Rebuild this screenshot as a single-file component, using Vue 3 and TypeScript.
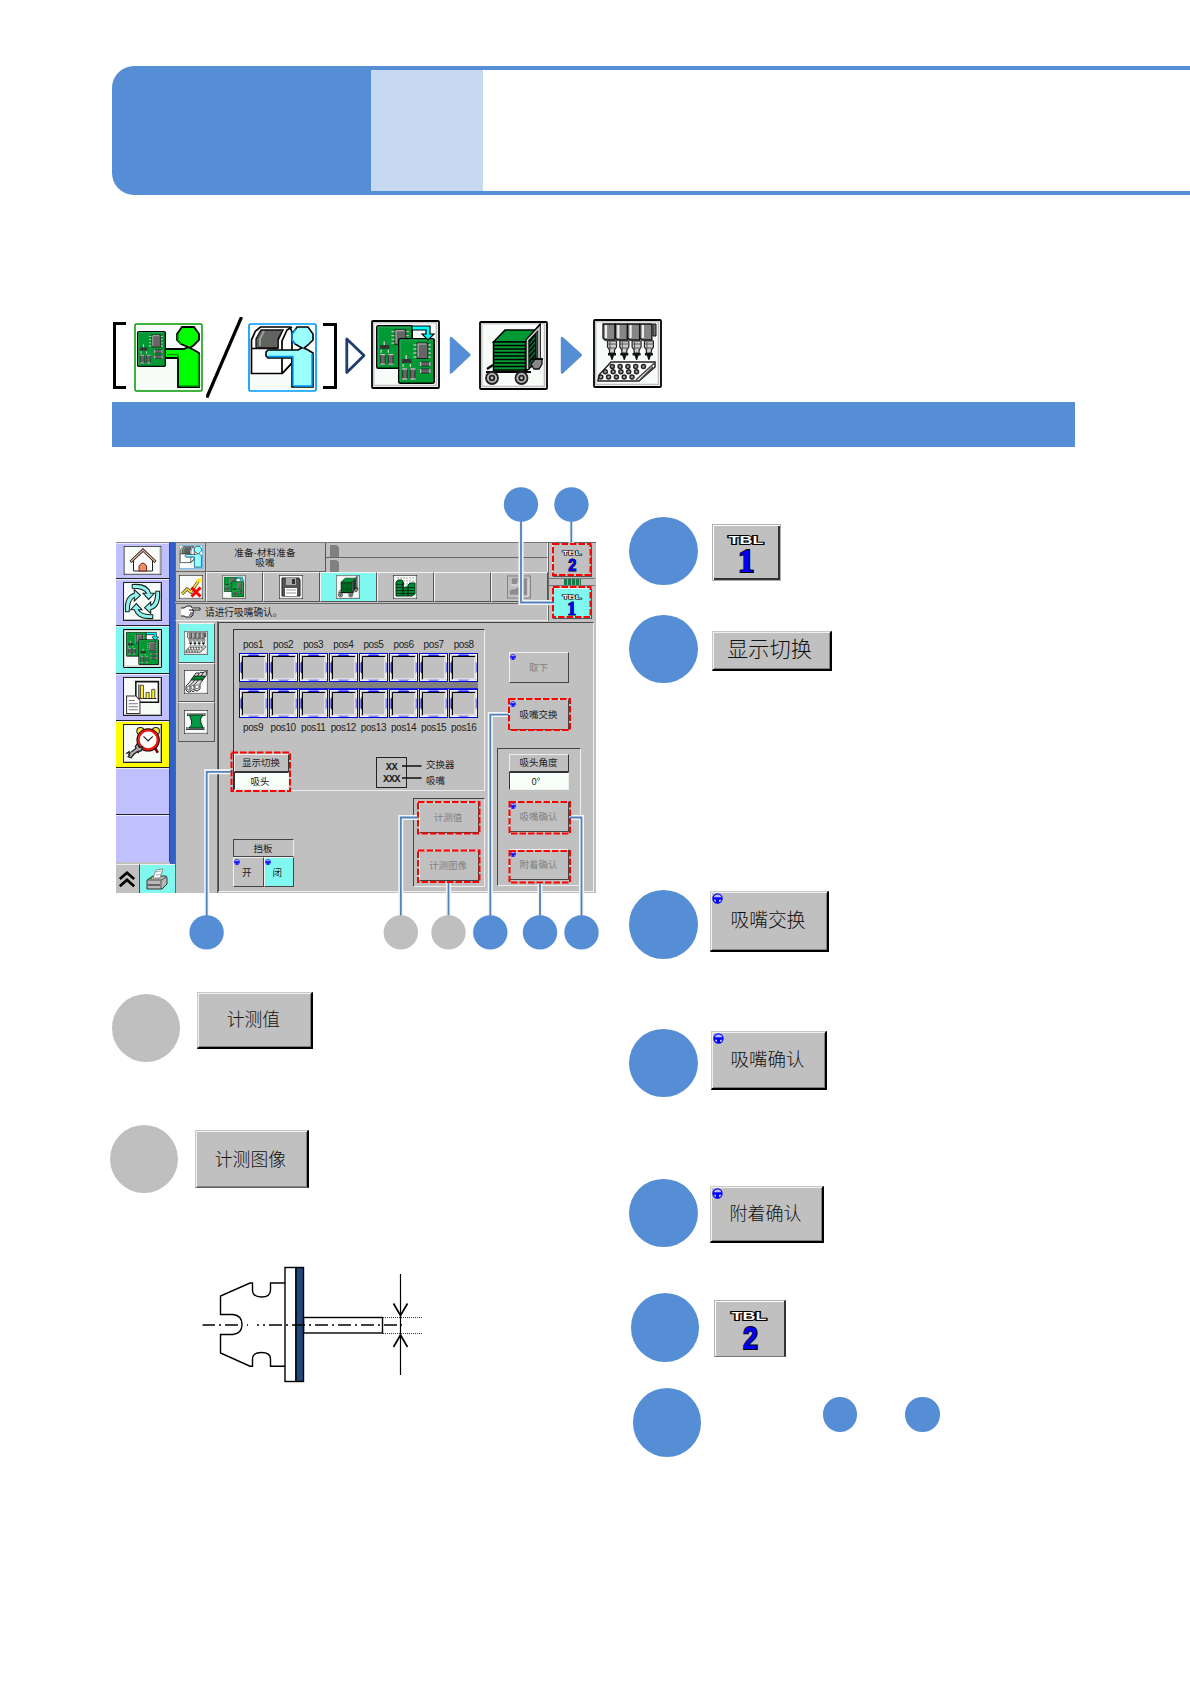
<template>
  <div class="page">
    <!-- 图标定义 -->
    <svg class="defs" width="0" height="0" aria-hidden="true">
      <defs>
        <symbol id="board" viewBox="0 0 36 46" preserveAspectRatio="none">
          <rect x=".8" y=".8" width="34.4" height="44.4" rx="1.5" fill="#009933" stroke="#000" stroke-width="1.6" />
          <path d="M2 43.8V2h32" fill="none" stroke="#33b060" stroke-width="1" />
          <path d="M15 7h17M15 11h17M15 15h17M15 19h17" stroke="#a8d0b0" stroke-width="1.3" />
          <rect x="18.5" y="5" width="10.5" height="15.5" fill="#666" stroke="#222" />
          <path d="M19.5 19V6h8" fill="none" stroke="#bbb" />
          <path d="M8 17v4M5 26v3M12 26v3" stroke="#ccc" stroke-width="1.3" />
          <path d="M4 21h9v4H4z" fill="#333" />
          <path d="M4.5 31H9v10H4.500zM12 31h4.500v10H12zM22 24h9v4h-9zM22 31h9v4h-9z" fill="#666" stroke="#222" stroke-width=".8" />
          <path d="M4 31h5M4 41h5M12 31h5M12 41h5M22 24v4M31 24v4M22 31v4M31 31v4" stroke="#c0c0c0" stroke-width="1.3" />
        </symbol>

        <symbol id="operator" viewBox="0 0 69 69">
          <rect x="1" y="1" width="67" height="67" rx="1.5" fill="#f7fcf8" stroke="#009900" stroke-width="1.5" />
          <path d="M48 4h12l5 7v6l-5 5-4 3 4 2 5 3v34H44V35H31v-9h19l4-2-7-3-4-4v-6z" fill="#00ff00" stroke="#000" stroke-width="1.8" />
          <path d="M44 34.5v-3H33M45.5 63h19V31M47 21l-3-4v-6" fill="none" stroke="#009900" stroke-width="1.5" />
          <use href="#board" x="3" y="8" width="29" height="36" />
        </symbol>

        <symbol id="feed" viewBox="0 0 69 69">
          <rect x="1" y="1" width="67" height="67" rx="1.5" fill="#f7fcfb" stroke="#0099ff" stroke-width="1.7" />
          <path d="M3.5 50.5V17l4-9 5-4H42l2 5v31L34 50.5zM34 50.5V18l5-11 5-3" fill="#fff" stroke="#000" stroke-width="1.7" />
          <path d="M3.5 25.5H30M30 25.5v-8l5-11M44 40l-9 10" fill="none" stroke="#000" stroke-width="1.4" />
          <path d="M8 25V16l5-9h22l-5 9v9z" fill="#60645f" stroke="#111" stroke-width="1.3" />
          <path d="M12 23v-7l4-8" fill="none" stroke="#9b9b9b" stroke-width="2" />
          <path d="M49 4h11l5 7v6l-5 5-4 3 4 2 5 3v34H44V35H20l-2-2v-4l2-2h30l4-2-7-4-3-4v-6z" fill="#99ffff" stroke="#000" stroke-width="1.6" />
          <path d="M20 33.5h25V63M64 31v32H46M47 21l-3-4v-6l4-5" fill="none" stroke="#0099ff" stroke-width="1.4" />
        </symbol>

        <symbol id="frame" viewBox="0 0 69 69">
          <rect x="1" y="1" width="67" height="67" rx="1" fill="#f7fcf9" stroke="#000" stroke-width="1.8" />
          <path d="M2.8 66V2.8H66" fill="none" stroke="#ccc" stroke-width="1.6" />
          <path d="M3 65.5h62.5V3" fill="none" stroke="#c0c0c0" stroke-width="1.6" />
        </symbol>

        <symbol id="boards" viewBox="0 0 69 69">
          <use href="#frame" width="69" height="69" />
          <use href="#board" x="5" y="5" width="37" height="44" />
          <use href="#board" x="27" y="18" width="37" height="46" />
          <path d="M41 6h18v8h4l-6 6-6-6h4v-4H41z" fill="#00ffff" stroke="#000" stroke-width="1.2" />
        </symbol>

        <symbol id="cart" viewBox="0 0 69 69">
          <use href="#frame" width="69" height="69" />
          <path d="M14.5 21L26 9h31L47 21z" fill="#009933" stroke="#000" stroke-width="1.5" />
          <path d="M47 21L57 9v33L47 50z" fill="#063" stroke="#000" stroke-width="1.5" />
          <path d="M48 23l8-9M48 28l8-9M48 33l8-9M48 38l8-9M48 43l8-9" stroke="#000" stroke-width="1.5" />
          <rect x="14.5" y="21" width="32" height="30" fill="#009933" stroke="#000" stroke-width="1.5" />
          <path d="M15 24.5h31M15 28h31M15 31.5h31M15 35h31M15 38.5h31M15 42h31M15 45.5h31M15 49h31" stroke="#000" stroke-width="1.3" />
          <path d="M52 43l5-6 6 1v5l-3 5h-5z" fill="#888" stroke="#111" stroke-width="1.3" />
          <path d="M48.5 49V19L60 6v32" fill="none" stroke="#000" stroke-width="3.6" />
          <path d="M48.5 48V19L60 7v31" fill="none" stroke="#ccc" stroke-width="1.700" />
          <path d="M7 51h45M8 48l6-4" stroke="#000" stroke-width="2.2" />
          <g fill="#bbb" stroke="#222" stroke-width="1.8">
            <circle cx="13" cy="57" r="6" /><circle cx="42.5" cy="57" r="6" />
            <circle cx="13" cy="57" r="2.3" /><circle cx="42.5" cy="57" r="2.3" />
          </g>
          <path d="M53 38h11" stroke="#000" stroke-width="1.8" />
        </symbol>

        <symbol id="nozzles" viewBox="0 0 69 69">
          <use href="#frame" width="69" height="69" />
          <g v-for="n in 4" :key="n" :transform="`translate(${10 + (n - 1) * 12.3} 5)`">
            <path d="M0 0h12v16H2l-2-2z" fill="#858585" stroke="#111" stroke-width="1.3" />
            <path d="M3 1v13" stroke="#eee" stroke-width="2.2" />
            <path d="M4.5 17h9v6l-2 3v3h-5v-3l-2-3z" fill="#ccc" stroke="#222" stroke-width="1.2" />
            <path d="M7 18v8M4.5 20h9M6 24h6" stroke="#555" stroke-width="1" />
            <path d="M5 29h8v2.500H11L9.500 36h-1L7 31.500H5z" fill="#111" />
          </g>
          <path d="M60 5h3v12h-3z" fill="#777" stroke="#111" />
          <path d="M18 43h44v5L46 62H5l1-6z" fill="#fff" stroke="#222" stroke-width="1.500" />
          <path d="M62 43.500L43 61M60 48L47 61" stroke="#444" stroke-width="1.600" />
          <g fill="#999" stroke="#222" stroke-width="1.500">
            <circle v-for="n in 5" :key="`a${n}`" :cx="11.500 + n * 7.800" cy="47.500" r="2" />
            <circle v-for="n in 5" :key="`b${n}`" :cx="4.500 + n * 7.800" cy="52.800" r="2" />
            <circle v-for="n in 5" :key="`c${n}`" :cx="0 + n * 7.800" cy="58" r="2" />
          </g>
        </symbol>

        <symbol id="box" viewBox="0 0 38 38" preserveAspectRatio="none">
          <rect x=".5" y=".5" width="37" height="37" fill="#f8fcf9" stroke="#222" />
          <path d="M1.500 36.500h35v-35" fill="none" stroke="#b5b5b5" />
        </symbol>

        <symbol id="home" viewBox="0 0 38 29">
          <use href="#box" width="38" height="29" />
          <path d="M10 14v11h19V14l-9-9z" fill="#fff" stroke="#222" />
          <path d="M7 16L19.500 4 32 16" fill="none" stroke="#222" stroke-width="3" />
          <path d="M7.500 15.500L19.500 4l12 11.500" fill="none" stroke="#f4b4a0" stroke-width="1.2" />
          <path d="M15.500 25v-5q4-6 7.500 0v5z" fill="#e8935f" stroke="#722" />
        </symbol>

        <symbol id="cycle" viewBox="0 0 38 38">
          <use href="#box" width="38" height="38" />
          <g v-for="a in [0, 90, 180, 270]" :key="a" :transform="`rotate(${a} 19 19)`" stroke="#15201f" stroke-width="1" fill="#8ff5f0">
            <path d="M9 2.500Q24 1 27 11h3.500L25 17l-5.500-6H23Q20.500 6 9 6z" />
          </g>
        </symbol>

        <symbol id="chart" viewBox="0 0 38 38">
          <use href="#box" width="38" height="38" />
          <path d="M12.500 4.500h22v20h-22z" fill="#fff" stroke="#111" stroke-width="1.500" />
          <path d="M15.500 7v14h17" fill="none" stroke="#111" />
          <path d="M17 8h3v13h-3zM22.500 15h3v6h-3zM28 12h3v9h-3z" fill="#ffee22" stroke="#333" stroke-width=".8" />
          <path d="M3.500 18.500h9l4 4v13h-13z" fill="#fff" stroke="#333" />
          <path d="M5.500 23h6M5.500 26h9M5.500 29h9M5.500 32h9" stroke="#777" />
        </symbol>

        <symbol id="alarm" viewBox="0 0 38 38">
          <use href="#box" width="38" height="38" />
          <path d="M17 23l-3 5M31 23l3 5" stroke="#600" stroke-width="2.500" />
          <circle cx="17" cy="7" r="3.500" fill="#ffe733" stroke="#221" />
          <circle cx="32" cy="7" r="3.500" fill="#ffe733" stroke="#221" />
          <circle cx="24.500" cy="15.500" r="9.500" fill="#fff" stroke="#200" stroke-width="3.800" />
          <circle cx="24.500" cy="15.500" r="9.300" fill="#fff" stroke="#e61c14" stroke-width="2.200" />
          <path d="M20 12l4.500 4.500L29 12" fill="none" stroke="#222" stroke-width="1.200" />
          <path d="M6 31l9-7" stroke="#222" stroke-width="4.500" />
          <path d="M3 29l3-2 1.500 2.500L5 32l3 1 2-3-1-3M12 22l2-3 2 4 3-1-1 4-4 1z" fill="#aaa" stroke="#222" stroke-width="1.200" />
          <path d="M7 30l8-6" stroke="#aaa" stroke-width="2.200" />
        </symbol>

        <symbol id="trace-off" viewBox="0 0 24 24">
          <use href="#box" width="24" height="24" />
          <path d="M3 19l5-5 4 3 8-12" fill="none" stroke="#333" stroke-width="3" />
          <path d="M3 19l5-5 4 3 8-12M17 6l4-2v4" fill="none" stroke="#ffe42a" stroke-width="1.700" />
          <path d="M12.500 12.500l9 9M21.500 12.500l-9 9" stroke="#f00" stroke-width="3" />
        </symbol>

        <symbol id="floppy" viewBox="0 0 24 24">
          <use href="#box" width="24" height="24" />
          <path d="M3 3h17l1 2v16H3z" fill="#555" stroke="#222" />
          <path d="M7 3h10v7H7z" fill="#aaa" /><path d="M13 4h3v5h-3z" fill="#333" />
          <path d="M6 13h12v8H6z" fill="#fff" /><path d="M7 15h10M7 18h10" stroke="#999" />
        </symbol>

        <symbol id="stacks" viewBox="0 0 24 24">
          <use href="#box" width="24" height="24" />
          <path d="M4 3h17M4 6h17M10 9h11" stroke="#aaa" stroke-dasharray="2 1" />
          <path d="M3 21V7l2-2h4l1 2v7l2-2h3v-2l2-2h5v11l-3 2z" fill="#008a35" stroke="#063218" />
          <path d="M3 9.500h7M3 12.500h7M3 15.500h18M3 18.500h18M15 12.500h7" stroke="#063218" />
          <path d="M10 7v13M15 12v9" stroke="#063218" stroke-width="1.500" />
        </symbol>

        <symbol id="gray-unit" viewBox="0 0 25 24">
          <rect x=".5" y=".5" width="24" height="23" fill="#c0c0c0" stroke="#808080" />
          <path d="M5 3h7l-2 6H5zM3 15l6-1 5-3v9H3zM15 5l2-2h4v18h-4V10h-2z" fill="#8d8d8d" />
          <path d="M4 10h7M14 21.500h8V4" fill="none" stroke="#e4e4e4" />
        </symbol>

        <symbol id="feeder" viewBox="0 0 24 24">
          <use href="#box" width="24" height="24" />
          <g v-for="n in 3" :key="n" :transform="`translate(${(n - 1) * 4} ${(1 - n) * 0.6})`">
            <path d="M2 16l3-3 7-10h3l-1 4-6 8v5l-2 2H4l-2-2z" fill="#ddd" stroke="#333" />
            <circle cx="5" cy="18" r="2" fill="#fff" stroke="#555" stroke-width=".8" />
          </g>
          <path d="M7 10l3-4h11l-3 4z" fill="#008833" stroke="#111" stroke-width=".8" />
        </symbol>

        <symbol id="film" viewBox="0 0 24 24">
          <use href="#box" width="24" height="24" />
          <path d="M3 4.500h18.500M2 18.500h18.500" stroke="#444" stroke-width="3" />
          <path d="M3.500 4h17M2.500 18h17" stroke="#eee" />
          <path d="M5.500 5H19q-4 4-2 8l2 5H5q4-3 2.500-7z" fill="#009944" stroke="#063218" />
        </symbol>

        <symbol id="wheel" viewBox="0 0 11 11">
          <circle cx="5.500" cy="5.500" r="4.600" fill="#b8c0f0" stroke="#0000ff" stroke-width="1.200" />
          <path d="M1 4.300h9v2.400H7V9h1v1H3V9h1V6.700H1z" fill="#0000ff" />
        </symbol>

        <symbol id="slot" viewBox="0 0 30 29">
          <rect x=".5" y=".5" width="28" height="28" fill="none" stroke="#0000e0" />
          <rect x="1.500" y="1.500" width="26" height="26" fill="none" stroke="#f4f4ff" />
          <path d="M10 1.500h9l1.500 1.500h-12zM10 27.500h9l1.500-1.500h-12zM1.500 10v9L3 21V8zM27.500 10v9l-1.500 2V8z" fill="#1818e8" />
          <rect x="3" y="3" width="23.500" height="23.500" fill="#c0c0c0" />
          <path d="M3.500 26V3.500H26" fill="none" stroke="#000" />
          <path d="M4 26h22V4" fill="none" stroke="#fff" />
        </symbol>
      </defs>
    </svg>

    <header class="banner">
      <div class="banner-main"></div>
      <div class="banner-sub"></div>
    </header>

    <nav class="crumbs">
      <svg class="bracket-l" width="15" height="68" viewBox="0 0 15 68"><path d="M14 1.500H2.500v64H14" fill="none" stroke="#000" stroke-width="3" /></svg>
      <svg class="crumb c-operator"><use href="#operator" /></svg>
      <svg class="slash" width="40" height="82" viewBox="0 0 40 82"><path d="M35.500 0L.8 80.500" stroke="#000" stroke-width="3.200" /></svg>
      <svg class="crumb c-feed"><use href="#feed" /></svg>
      <svg class="bracket-r" width="16" height="67" viewBox="0 0 16 67"><path d="M1 1.500h12.500v63H1" fill="none" stroke="#000" stroke-width="3" /></svg>
      <svg class="tri-open" width="24" height="38" viewBox="0 0 24 38"><path d="M2.800 2v33.500L20 18.500z" fill="#fff" stroke="#1f3f6e" stroke-width="2.800" stroke-linejoin="round" /></svg>
      <svg class="crumb c-boards"><use href="#boards" /></svg>
      <svg class="tri t1" width="22" height="38" viewBox="0 0 22 38"><path d="M2 2v34.500L20.500 19z" fill="#558ed5" stroke="#558ed5" stroke-width="2.400" stroke-linejoin="round" /></svg>
      <svg class="crumb c-cart"><use href="#cart" /></svg>
      <svg class="tri t2" width="22" height="38" viewBox="0 0 22 38"><path d="M2 2v34.500L20.800 19z" fill="#558ed5" stroke="#558ed5" stroke-width="2.400" stroke-linejoin="round" /></svg>
      <svg class="crumb c-nozzles"><use href="#nozzles" /></svg>
    </nav>

    <div class="section-bar"></div>

    <main class="content">
      <section class="left">
        <div class="figure">
          <div class="screen">
            <div class="side">
              <div class="side-top">
                <ul class="menu">
                  <li v-for="(m, i) in menu" :key="i" :class="['menu-item', m.state]">
                    <svg v-if="m.icon" :class="['menu-icon', m.icon]"><use :href="`#${m.icon}`" /></svg>
                  </li>
                </ul>
                <div class="strip"></div>
              </div>
              <div class="side-bottom">
                <div class="up">
                  <svg width="18" height="20" viewBox="0 0 20 22"><path d="M2 11l8-7 8 7M2 19l8-7 8 7" fill="none" stroke="#000" stroke-width="3" /></svg>
                </div>
                <div class="print">
                  <svg width="24" height="24" viewBox="0 0 24 24">
                    <path d="M2 13l6-4h13l1 2v6l-5 5H2z" fill="#b8b8b8" stroke="#333" />
                    <path d="M2 13h14l6-3M16 13v9" fill="none" stroke="#555" />
                    <path d="M8 11l3-8 7-1-3 9z" fill="#fff" stroke="#777" stroke-width=".8" />
                    <path d="M11 8l5-1M11 5l5-1" stroke="#aaa" /><path d="M3 17h12v2H3z" fill="#666" />
                    <path d="M5 11h2" stroke="#0a0" stroke-width="2" />
                  </svg>
                </div>
              </div>
            </div>

            <div class="work">
              <div class="top">
                <div class="top-main">
                  <div class="title-row">
                    <div class="title-icon"><svg class="i24"><use href="#feed" /></svg></div>
                    <div class="title"><span>准备-材料准备</span><span>吸嘴</span></div>
                    <div class="info"><div v-for="n in 2" :key="n" class="info-line"><i></i></div></div>
                  </div>
                  <div class="tool-row">
                    <div class="title-icon"><svg class="i24"><use href="#trace-off" /></svg></div>
                    <div v-for="(t, i) in tools" :key="i" :class="['tool', { on: t === 'cart' }]">
                      <svg v-if="t" class="i24"><use :href="`#${t}`" /></svg>
                    </div>
                  </div>
                  <div class="message">
                    <svg width="21" height="14" viewBox="0 0 21 14"><path d="M1 3h3l3-2h4l1 2h8v2h-8l2 1-1 2v2l-2 2H6l-2-1H1M9 5h4M10 8h3M9 10h3" fill="#f8f8f8" stroke="#222" stroke-width="1" /></svg>
                    <span>请进行吸嘴确认。</span>
                  </div>
                </div>
                <div class="tables">
                  <div class="table-btn">
                    <svg viewBox="0 0 69 57" class="tbl-mini"><text x="17" y="18.500" class="tbl-word" textLength="35" lengthAdjust="spacingAndGlyphs">TBL</text><text x="27.500" y="48" class="tbl-two" textLength="15" lengthAdjust="spacingAndGlyphs">2</text></svg>
                  </div>
                  <div class="table-link"><i></i></div>
                  <div class="table-btn on">
                    <svg viewBox="0 0 69 57" class="tbl-mini"><text x="17" y="18.500" class="tbl-word" textLength="35" lengthAdjust="spacingAndGlyphs">TBL</text><text x="26" y="47.500" class="tbl-one">1</text></svg>
                  </div>
                </div>
              </div>

              <div class="lower">
                <div class="tabs">
                  <div v-for="(t, i) in tabs" :key="t" :class="['tab', { on: i === 0 }]">
                    <svg class="i24"><use :href="`#${t}`" /></svg>
                  </div>
                </div>

                <div class="panel">
                  <div class="panel-left">
                    <div class="slots">
                      <div class="pos-row"><span v-for="n in 8" :key="n">pos{{ n }}</span></div>
                      <div class="slot-row"><svg v-for="n in 8" :key="n"><use href="#slot" /></svg></div>
                      <div class="rail"></div>
                      <div class="slot-row"><svg v-for="n in 8" :key="n"><use href="#slot" /></svg></div>
                      <div class="pos-row bottom"><span v-for="n in 8" :key="n">pos{{ n + 8 }}</span></div>
                      <div class="slots-foot">
                        <div class="toggle">
                          <div class="toggle-label">显示切换</div>
                          <div class="toggle-value">吸头</div>
                        </div>
                        <div class="legend-box"><b>XX</b><b>XXX</b></div>
                        <div class="legend">
                          <span>交换器</span>
                          <span>吸嘴</span>
                        </div>
                      </div>
                    </div>
                    <div class="panel-foot">
                      <div class="shutter">
                        <div class="shutter-label">挡板</div>
                        <div class="shutter-btns">
                          <div class="mini-btn"><svg class="wheel"><use href="#wheel" /></svg>开</div>
                          <div class="mini-btn on"><svg class="wheel"><use href="#wheel" /></svg>闭</div>
                        </div>
                      </div>
                      <div class="measure">
                        <div class="btn dim">计测值</div>
                        <div class="btn dim">计测图像</div>
                      </div>
                    </div>
                  </div>
                  <div class="panel-right">
                    <div class="btn dim"><svg class="wheel"><use href="#wheel" /></svg>取下</div>
                    <div class="btn swap"><svg class="wheel"><use href="#wheel" /></svg>吸嘴交换</div>
                    <div class="angle">
                      <div class="angle-label">吸头角度</div>
                      <div class="angle-value">0°</div>
                      <div class="btn dim"><svg class="wheel"><use href="#wheel" /></svg>吸嘴确认</div>
                      <div class="btn dim"><svg class="wheel"><use href="#wheel" /></svg>附着确认</div>
                    </div>
                  </div>
                </div>
              </div>
            </div>
          </div>

          <!-- 引出线与标注圆点 -->
          <svg class="callouts" viewBox="112 447 500 520">
            <path d="M402 766h19.500M402 778h19.500" stroke="#111" stroke-width="1.300" />
            <g fill="none" stroke="#f5f5f5" stroke-width="5">
              <path v-for="(d, i) in leaders" :key="i" :d="d" />
            </g>
            <g fill="none" stroke="#ff0000" stroke-width="2" stroke-dasharray="6.500 2">
              <rect v-for="(f, i) in frames" :key="i" :x="f[0]" :y="f[1]" :width="f[2]" :height="f[3]" />
            </g>
            <g fill="none" stroke="#4f81bd" stroke-width="1.800">
              <path v-for="(d, i) in leaders" :key="i" :d="d" />
            </g>
            <circle v-for="(c, i) in dots" :key="i" :cx="c.x" :cy="c.y" r="17.200" :fill="c.off ? '#bfbfbf' : '#558ed5'" />
          </svg>
        </div>

        <div class="item item-value">
          <div class="dot gray"></div>
          <div class="key">计测值</div>
        </div>
        <div class="item item-image">
          <div class="dot gray"></div>
          <div class="key">计测图像</div>
        </div>

        <!-- 吸嘴侧视图 -->
        <svg class="nozzle" width="250" height="150" viewBox="0 0 250 150" fill="none" stroke="#000" stroke-width="1.400">
          <path d="M95 33H80.500v7q0 7-9 7t-9-7v-7H60L30.500 46v18.500H43q9 1 9 10t-9 10H30.500V103L60 116.200h2.500V109q0-6.500 9-6.500t9 6.500v7.200H95" />
          <rect x="95" y="17.500" width="11" height="114" />
          <rect x="106" y="17.500" width="7.500" height="114" fill="#1f497d" />
          <rect x="113.500" y="67.500" width="79" height="15.500" />
          <path d="M12.500 75H25m4 0h2m4 0h13m9 0h1M67 75h2m4 0h2m4 0h13m4 0h2m4 0h13m4 0h2m4 0h13m4 0h2m4 0h13m4 0h2m4 0h13m4 0h2m4 0h13m3 0h2" />
          <path d="M193 67.500h40M193 83.500h40" stroke-width=".8" stroke-dasharray="1 1" />
          <path d="M210.500 24v101" stroke-width="1.200" />
          <path d="M203.500 53.500l7 12 7-12M203.500 97l7-12 7 12" stroke-width="1.700" />
        </svg>
      </section>

      <section class="right">
        <div v-for="k in keys" :key="k.id" :class="['item', `item-${k.id}`]">
          <div class="dot"></div>
          <div v-if="k.table" class="key tbl">
            <svg width="69" height="57" viewBox="0 0 69 57">
              <text x="16.500" y="18.500" class="tbl-word" textLength="35" lengthAdjust="spacingAndGlyphs">TBL</text>
              <text v-if="k.table === 1" x="26" y="47" class="tbl-one">1</text>
              <text v-else x="28" y="47.500" class="tbl-two" textLength="15" lengthAdjust="spacingAndGlyphs">2</text>
            </svg>
          </div>
          <div v-else class="key">
            <svg v-if="k.wheel" class="wheel"><use href="#wheel" /></svg>{{ k.label }}
          </div>
        </div>
        <div class="item item-range">
          <div class="dot"></div>
          <div class="dot small first"></div>
          <div class="dot small"></div>
        </div>
      </section>
    </main>
  </div>
</template>

<script setup lang="ts">
interface MenuItem {
  icon?: string
  state?: string
}

interface KeyItem {
  id: string
  label?: string
  table?: number      // TBL 按钮编号
  wheel?: boolean     // 左上角手轮标记
}

interface Dot {
  x: number
  y: number
  off?: boolean
}

// 左侧主菜单
const menu: MenuItem[] = [
  { icon: 'home' },
  { icon: 'cycle' },
  { icon: 'boards', state: 'active' },
  { icon: 'chart' },
  { icon: 'alarm', state: 'warn' },
  {},
  {},
]

const tools = ['boards', 'floppy', 'cart', 'stacks', '', 'gray-unit']
const tabs = ['nozzles', 'feeder', 'film']

const keys: KeyItem[] = [
  { id: 'tbl1', table: 1 },
  { id: 'switch', label: '显示切换' },
  { id: 'swap', label: '吸嘴交换', wheel: true },
  { id: 'check', label: '吸嘴确认', wheel: true },
  { id: 'attach', label: '附着确认', wheel: true },
  { id: 'tbl2', table: 2 },
]

// 引出线
const leaders = [
  'M521 520V602.5H553',
  'M571.3 520V543',
  'M206.7 917V771.8H231',
  'M400.8 917V817.5H418',
  'M448.5 917V883',
  'M490.3 917V714.6H509',
  'M540 917V883',
  'M581.5 917V817.5H570',
]

// 红色虚线框 [x, y, w, h]
const frames = [
  [553, 544, 37.5, 31],
  [553, 587, 37.5, 30],
  [509, 699, 61, 31],
  [231.5, 752.5, 58.5, 38.5],
  [418, 802, 61.5, 31.5],
  [418, 850.5, 61.5, 31.5],
  [509.5, 802, 60.5, 31.5],
  [509.5, 851, 60.5, 31.5],
]

const dots: Dot[] = [
  { x: 521, y: 504.5 },
  { x: 571.4, y: 504.5 },
  { x: 206.6, y: 932.4 },
  { x: 400.8, y: 932.4, off: true },
  { x: 448.5, y: 932.4, off: true },
  { x: 490.3, y: 932.4 },
  { x: 540, y: 932.4 },
  { x: 581.5, y: 932.4 },
]
</script>

<style>
body {
  margin: 0;
  background: #fff;
}
</style>

<style scoped>
.page,
.page * {
  box-sizing: border-box;
}

.page {
  width: 1190px;
  height: 1684px;
  overflow: hidden;
  background: #fff;
  font-family: 'Noto Sans CJK SC', 'Liberation Sans', sans-serif;
  color: #000;
}

svg {
  display: block;
  flex: none;
}

.defs {
  position: absolute;
}

/* ========== 页眉 ========== */
.banner {
  display: flex;
  height: 195px;
  padding: 65.5px 0 0 112px;
}

.banner-main {
  width: 259px;
  height: 129.5px;
  border-radius: 22px 0 0 22px;
  background: #558ed5;
}

.banner-sub {
  flex: 1;
  height: 129.5px;
  border: solid #558ed5;
  border-width: 4px 0;
  background: linear-gradient(to right, #c6d9f1 112px, #fff 112px);
}

/* ========== 操作路径 ========== */
.crumbs {
  display: flex;
  align-items: flex-start;
  height: 207px;
  padding: 122px 0 0 112px;
}

.crumb {
  width: 69px;
  height: 69px;
}

.bracket-l { margin-top: 5px; }
.c-operator { margin: 6px 0 0 7px; }
.slash { margin: 0 0 0 3px; }
.c-feed { margin: 6px 0 0 2px; }
.bracket-r { margin: 6px 0 0 5px; }
.tri-open { margin: 20px 0 0 6px; }
.c-boards { margin: 3px 0 0 3px; }
.t1 { margin: 19px 0 0 9px; }
.c-cart { margin: 4px 0 0 8px; }
.t2 { margin: 19px 0 0 12px; }
.c-nozzles { margin: 2px 0 0 11px; }

.section-bar {
  width: 963px;
  height: 45px;
  margin-left: 112px;
  background: #558ed5;
}

.content {
  display: flex;
}

.left {
  width: 629px;
  padding-left: 112px;
}

.figure {
  position: relative;
  height: 545px;
  padding: 95px 0 0 4px;
}

.callouts {
  position: absolute;
  left: 0;
  top: 0;
  width: 500px;
  height: 520px;
}

/* ========== 设备画面 ========== */
.screen {
  display: flex;
  width: 480px;
  height: 351px;
  background: #c0c0c0;
  font-size: 9.5px;
  line-height: 12px;
  white-space: nowrap;
  color: #222;
}

.side {
  width: 59px;
}

.side-top {
  display: flex;
  height: 322px;
}

.menu {
  width: 54px;
  margin: 0;
  padding: 0;
  list-style: none;
}

.menu-item {
  display: flex;
  align-items: center;
  justify-content: center;
  height: 47.3px;
  padding-bottom: 1px;
  border-top: 1px solid #222;
  border-right: 1px solid #444;
  background: #c0c0ff;
  box-shadow: inset 0 1px #e8e8ff;
}

.menu-item:first-child {
  height: 36px;
  border-top-color: #888;
}

.menu-item.active { background: #80f8f0; }
.menu-item.warn { background: #ffff00; }

.menu-icon {
  width: 39px;
  height: 39px;
}

.menu-icon.home { height: 29px; }

.strip {
  width: 5px;
  background: #3060c8;
}

.side-bottom {
  display: flex;
  height: 29px;
}

.up,
.print {
  display: flex;
  align-items: center;
  justify-content: center;
  border-top: 1px solid #eee;
}

.up {
  width: 23px;
  padding-right: 2px;
}

.print {
  width: 36px;
  padding-right: 2px;
  border-left: 1px solid #444;
  background: #80f8f0;
}

.work {
  width: 421px;
}

.top {
  display: flex;
  height: 79px;
}

.top-main {
  width: 373px;
}

.title-row,
.tool-row {
  display: flex;
  height: 30px;
}

.title-row {
  border-top: 1px solid #777;
}

.title-icon {
  display: flex;
  align-items: center;
  justify-content: center;
  width: 31px;
  border: solid #666;
  border-width: 0 1px 1px;
}

.i24 {
  width: 24px;
  height: 24px;
}

.title {
  display: flex;
  flex-direction: column;
  align-items: center;
  width: 119px;
  padding: 5px 1px 0 0;
  border-bottom: 1px solid #666;
  line-height: 9.5px;
  letter-spacing: 0.15px;
}

.info {
  flex: 1;
  border-left: 1px solid #555;
}

.info-line {
  height: 15px;
  padding: 2px 4px;
  border-bottom: 1px solid #666;
  border-right: 1px solid #eee;
}

.info-line i {
  display: block;
  width: 9px;
  height: 12px;
  border-radius: 0 4px 0 0;
  background: #808080;
}

.tool {
  display: flex;
  align-items: center;
  justify-content: center;
  width: 57px;
  padding-right: 2px;
  border: 1px solid #555;
  border-top-color: #f4f4f4;
  border-left-color: #f4f4f4;
}

.tool.on { background: #80f8f0; }

.message {
  display: flex;
  align-items: center;
  gap: 4px;
  height: 18px;
  margin-top: 1px;
  padding-left: 4px;
  border: 1px solid #666;
  border-bottom-color: #eee;
  border-right-color: #eee;
  font-size: 9.7px;
}

.tables {
  width: 48px;
  padding: 1px 4px 0 3px;
  border: solid #666;
  border-width: 1px 0 0 1px;
}

.table-btn {
  height: 33px;
  border: 1px solid #555;
  border-top-color: #eee;
  border-left-color: #eee;
}

.table-btn.on {
  height: 31px;
  background: #80f8f0;
}

.tbl-mini {
  width: 38px;
  height: 31px;
}

.table-link {
  height: 8px;
  margin: 1px -3px 2px;
  border: solid #777;
  border-width: 1px 0;
}

.table-link i {
  display: block;
  width: 17px;
  height: 6px;
  margin: 0 auto;
  background: repeating-linear-gradient(90deg, #167a4a 0 3px, #78b898 3px 4px);
}

.tbl-word {
  font: bold 11.5px 'Liberation Sans', sans-serif;
  fill: #fff;
  stroke: #000;
  stroke-width: 2px;
  paint-order: stroke;
}

.tbl-one,
.tbl-two {
  font: bold 33px 'Liberation Serif', serif;
  fill: #0000ff;
  stroke: #000;
  stroke-width: 2px;
  paint-order: stroke;
}

.tbl-two {
  font: bold 32px 'Liberation Sans', sans-serif;
}

.lower {
  display: flex;
  height: 272px;
}

.tabs {
  width: 43px;
  padding: 2px 3px 0 2px;
  border: solid #666;
  border-width: 0 1px;
}

.tab {
  display: flex;
  align-items: center;
  justify-content: center;
  width: 37px;
  height: 39.5px;
  padding-right: 2px;
  border: 1px solid #555;
  border-top-color: #f4f4f4;
  border-left-color: #888;
}

.tab.on { background: #80f8f0; }

.panel {
  display: flex;
  width: 376px;
  height: 270px;
  margin-top: 1px;
  border: 1px solid #444;
  border-right-color: #eee;
  border-bottom-color: #eee;
}

.panel-left {
  width: 252px;
  margin-left: 14px;
}

.slots {
  height: 162px;
  margin-top: 6px;
  border: 1px solid #333;
  border-right-color: #eee;
  border-bottom-color: #eee;
}

.pos-row {
  display: flex;
  height: 23px;
  padding: 9px 0 0 4px;
  font: 10px/12px 'Liberation Sans', sans-serif;
  letter-spacing: -0.4px;
}

.pos-row span {
  width: 30.1px;
  text-align: center;
}

.pos-row.bottom {
  height: 36px;
  padding-top: 4px;
}

.slot-row {
  display: flex;
  height: 29px;
  padding-left: 5px;
}

.slot-row svg {
  width: 30px;
  height: 29px;
}

.rail {
  width: 239px;
  height: 7px;
  margin-left: 5px;
  border-bottom: 1px solid #2020e0;
  background: #808080;
}

.slots-foot {
  display: flex;
  height: 36px;
}

.toggle {
  width: 55px;
}

.toggle-label,
.angle-label {
  height: 18px;
  padding-right: 1px;
  border: 1px solid #333;
  border-top-color: #eee;
  border-left-color: #eee;
  text-align: center;
  line-height: 15px;
}

.toggle-value,
.angle-value {
  height: 18px;
  padding-right: 3px;
  border: 1px solid #333;
  border-right-color: #eee;
  border-bottom-color: #eee;
  background: #f8fff8;
  text-align: center;
  line-height: 16px;
}

.angle-value { padding-right: 6px; }

.legend-box {
  display: flex;
  flex-direction: column;
  align-items: center;
  width: 31px;
  height: 31px;
  margin: 3px 0 0 87px;
  padding-top: 3px;
  border: 1px solid #222;
  font: bold 10.5px/12px 'Liberation Mono', monospace;
  letter-spacing: -0.6px;
}

.legend {
  display: flex;
  flex-direction: column;
  margin: 2px 0 0 19px;
  line-height: 16px;
}

.panel-foot {
  display: flex;
  align-items: flex-start;
}

.shutter {
  width: 61px;
  margin-top: 48px;
}

.shutter-label {
  height: 18px;
  padding-right: 1px;
  border: 1px solid #444;
  border-right-color: #eee;
  text-align: center;
  line-height: 16px;
}

.shutter-btns {
  display: flex;
}

.btn,
.mini-btn,
.key {
  position: relative;
  display: flex;
  align-items: center;
  justify-content: center;
  background: #c0c0c0;
}

.btn,
.mini-btn {
  padding: 0 1px 1px 0;
  border: 1px solid #444;
  border-top-color: #f0f0f0;
  border-left-color: #f0f0f0;
}

.mini-btn {
  width: 30.5px;
  height: 30px;
  padding: 0 3px 1px 0;
}

.mini-btn.on { background: #80f8f0; }

.wheel {
  position: absolute;
  left: 0;
  top: 1px;
  width: 6px;
  height: 6px;
}

.measure {
  width: 72px;
  height: 89px;
  margin: 7px 0 0 119px;
  padding: 3px 0 0 5px;
  border: 1px solid #444;
  border-right-color: #eee;
  border-bottom-color: #eee;
}

.btn {
  width: 60px;
  height: 31px;
}

.btn.dim { color: #808080; }

.measure .btn { padding-right: 2px; }

.measure .btn + .btn,
.angle .btn + .btn {
  margin-top: 17px;
}

.panel-right {
  padding: 29px 0 0 12px;
}

.panel-right > .btn { margin-left: 12px; }
.panel-right > .swap { margin-top: 16px; }

.angle {
  width: 84px;
  height: 138px;
  margin-top: 18px;
  padding: 5px 11px 0;
  border: 1px solid #444;
  border-right-color: #eee;
  border-bottom-color: #eee;
}

.angle-value + .btn { margin-top: 11px; }

/* ========== 按键说明 ========== */
.item {
  display: flex;
  align-items: flex-start;
}

.dot {
  flex: none;
  width: 68.4px;
  height: 68.4px;
  border-radius: 50%;
  background: #558ed5;
}

.dot.gray { background: #bfbfbf; }

.dot.small {
  width: 34.4px;
  height: 34.4px;
}

.key {
  padding: 0 2px 3px 0;
  border: 1px solid #c8c8c8;
  border-right: 2px solid #000;
  border-bottom: 2px solid #000;
  box-shadow: inset 1px 1px #f0f0f0, inset -1px -1px #808080;
  white-space: nowrap;
  color: #111;
  font-size: 18.5px;
  font-weight: 300;
  line-height: 24px;
}

.key .wheel {
  top: 1px;
  left: 1px;
  width: 11px;
  height: 11px;
}

.key.tbl {
  align-items: flex-start;
  padding: 0;
  border: 1px solid #b0b0b0;
  box-shadow: inset 1px 1px #fff, inset -2px -2px #333;
}

.item-value { height: 133px; padding-top: 2px; }
.item-value .key { width: 116px; height: 57px; margin: -2px 0 0 16.6px; padding-bottom: 4px; font-size: 17.8px; }
.item-image { height: 125px; margin-left: -2px; }
.item-image .key { width: 114px; height: 58px; margin: 5px 0 0 17px; padding-right: 3px; font-size: 17.8px; border-bottom: 1px solid #666; }

.nozzle { margin-left: 78px; }

.right {
  width: 561px;
  padding: 70px 0 0 0.3px;
}

.item-tbl1 { height: 97.7px; }
.item-tbl1 .key { width: 69px; height: 57px; margin: 7px 0 0 14.3px; }
.item-switch { height: 275.8px; }
.item-switch .key { width: 120px; height: 40px; margin: 16.3px 0 0 14.3px; padding: 0 4px 4px 0; font-size: 21.2px; }
.item-swap { height: 138.5px; }
.item-swap .key { width: 119px; height: 61px; margin: 0.5px 0 0 12.3px; font-size: 18.8px; }
.item-check { height: 150px; }
.item-check .key { width: 116px; height: 59px; margin: 2px 0 0 13.3px; }
.item-attach { height: 114.5px; }
.item-attach .key { width: 114px; height: 57px; margin: 7px 0 0 12.3px; font-size: 18px; }
.item-tbl2 { height: 95px; margin-left: 1.5px; }
.item-tbl2 .key { width: 72px; height: 57px; margin: 6.5px 0 0 14.8px; border-right: 2px solid #333; border-bottom: 1px solid #777; box-shadow: inset 1px 1px #fff; }
.item-range { margin-left: 3.5px; }
.item-range .small { margin-top: 9px; }
.item-range .first { margin: 9px 48.2px 0 121.6px; }
</style>
